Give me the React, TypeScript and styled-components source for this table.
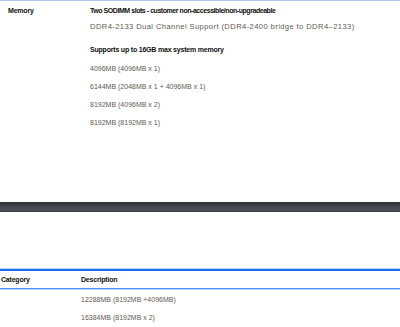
import React from "react";
import styled, { createGlobalStyle } from "styled-components";

const Global = createGlobalStyle`
  html, body { margin: 0; padding: 0; background: #fff; }
  body { font-family: "Liberation Sans", Arial, sans-serif; overflow: hidden; }
`;

const Page = styled.div`
  width: 400px;
  height: 327px;
  display: flex;
  flex-direction: column;
`;

const SpecRow = styled.div`
  display: grid;
  grid-template-columns: 90px 1fr;
  border-top: 1px solid #a9c9f2;
  padding-top: 4px;
  height: 202px;
  box-sizing: border-box;
`;

const Label = styled.div`
  padding-left: 8px;
  font-size: 7px;
  font-weight: bold;
  line-height: 12px;
  color: #111;
  letter-spacing: -0.2px;
`;

const Desc = styled.div`
  display: flex;
  flex-direction: column;
`;

const Heading = styled.div<{ $gap?: number; $ls?: number }>`
  font-size: 7px;
  font-weight: bold;
  line-height: 12px;
  color: #111;
  letter-spacing: ${(p) => p.$ls ?? -0.2}px;
  margin-top: ${(p) => p.$gap ?? 0}px;
`;

const Body = styled.div<{ $gap?: number; $lh?: number; $ls?: number; $size?: number }>`
  font-size: ${(p) => p.$size ?? 7}px;
  line-height: ${(p) => p.$lh ?? 12}px;
  color: #5f5953;
  letter-spacing: ${(p) => p.$ls ?? 0}px;
  margin-top: ${(p) => p.$gap ?? 0}px;
`;

const List = styled.div`
  margin-top: 4px;
  display: flex;
  flex-direction: column;
`;

const DarkBar = styled.div`
  margin-top: 4px;
  height: 10px;
  background: linear-gradient(#2f3235, #44474b 45%, #4e5156 75%, #3b3e42);
`;

const Spacer = styled.div`
  height: 58px;
`;

const Table = styled.div`
  display: flex;
  flex-direction: column;
`;

const HeadRow = styled.div`
  display: grid;
  grid-template-columns: 81px 1fr;
  border-top: 2px solid #1c6cf6;
  border-bottom: 1px solid #4b8cf6;
  box-shadow: 0 1px 0 #b9d3fb, 0 -1px 0 #b9d3fb;
  height: 17px;
  box-sizing: content-box;
  align-items: center;
`;

const HeadCell = styled.div<{ $pad?: number }>`
  padding-left: ${(p) => p.$pad ?? 0}px;
  font-size: 7px;
  font-weight: bold;
  color: #111;
  letter-spacing: -0.2px;
`;

const DataRow = styled.div`
  display: grid;
  grid-template-columns: 81px 1fr;
  padding-top: 2px;
`;

const ListBox = styled.div`
  display: flex;
  flex-direction: column;
`;

const memory = [
  "4096MB (4096MB x 1)",
  "6144MB (2048MB x 1 + 4096MB x 1)",
  "8192MB (4096MB x 2)",
  "8192MB (8192MB x 1)",
];

export default function App() {
  return (
    <>
      <Global />
      <Page>
        <SpecRow>
          <Label>Memory</Label>
          <Desc>
            <Heading $ls={-0.45}>Two SODIMM slots - customer non-accessible/non-upgradeable</Heading>
            <Body $gap={4} $ls={0.4} $size={7.6}>DDR4-2133 Dual Channel Support (DDR4-2400 bridge to DDR4–2133)</Body>
            <Heading $gap={11}>Supports up to 16GB max system memory</Heading>
            <List>
              {memory.map((m, i) => (
                <Body key={i} $lh={18}>{m}</Body>
              ))}
            </List>
          </Desc>
        </SpecRow>
        <DarkBar />
        <Spacer />
        <Table>
          <HeadRow>
            <HeadCell $pad={1}>Category</HeadCell>
            <HeadCell>Description</HeadCell>
          </HeadRow>
          <DataRow>
            <div />
            <ListBox>
              <Body $lh={18}>12288MB (8192MB +4096MB)</Body>
              <Body $lh={18}>16384MB (8192MB x 2)</Body>
            </ListBox>
          </DataRow>
        </Table>
      </Page>
    </>
  );
}
